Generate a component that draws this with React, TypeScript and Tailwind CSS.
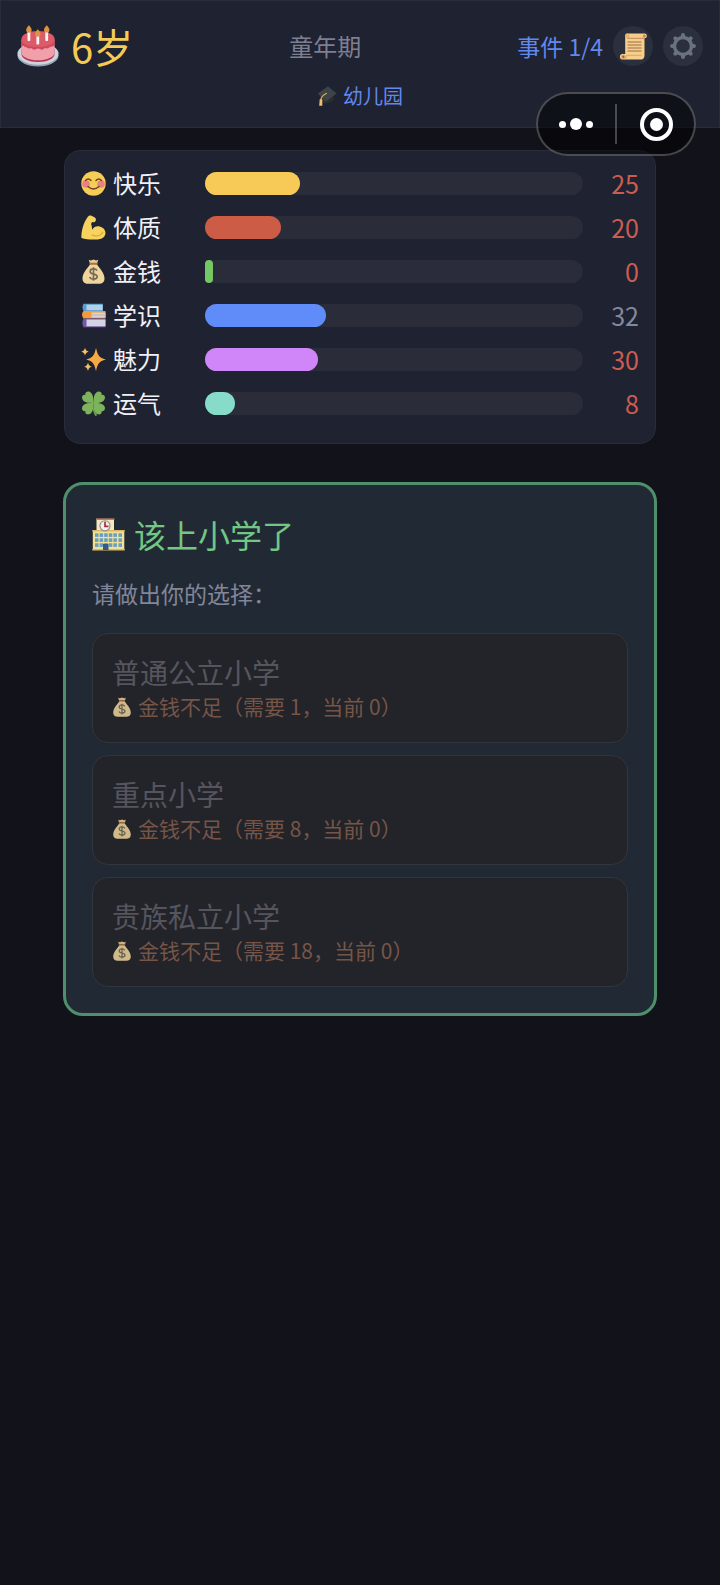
import { useState } from "react";
import type { ReactNode } from "react";
import clsx from "clsx";

interface IconProps {
    className?: string;
}

interface Stat {
    label: string;
    value: number;
    bar: string;
    low: boolean;
    icon: ReactNode;
}

interface SchoolOption {
    name: string;
    cost: number;
}

function CakeIcon({ className }: IconProps) {
    return (
        <svg viewBox="0 0 42 42" className={className} aria-hidden="true">
            <ellipse cx="21" cy="30.5" rx="20.5" ry="11" fill="#8fa0b3" />
            <ellipse cx="21" cy="28.8" rx="20.5" ry="11" fill="#ccd3df" />
            <path d="M4.500 24v5c0 4.800 7.400 8 16.500 8s16.500-3.200 16.500-8v-5z" fill="#b7354c" />
            <path d="M4.500 15v12.500c0 4.600 7.400 7.800 16.500 7.800s16.500-3.200 16.500-7.800V15z" fill="#f09fab" />
            <path
                d="M4.500 13.500v6c1.500 3 4 1.600 5.600 3.200 1.800 1.800 3.700-.3 5.400 1.200 2 1.900 3.500-.4 5.500-.4s3.500 2.300 5.500.4c1.700-1.500 3.600.6 5.400-1.200 1.600-1.600 4.100-.2 5.600-3.200v-6z"
                fill="#cf4a5c"
            />
            <ellipse cx="21" cy="14" rx="16.500" ry="8" fill="#dc5b69" />
            <g fill="#fbf4f3">
                <rect x="10.500" y="6.500" width="2.800" height="9.500" rx=".8" />
                <rect x="28.300" y="6.500" width="2.800" height="9.500" rx=".8" />
                <rect x="19.400" y="10" width="2.800" height="9.500" rx=".8" />
            </g>
            <g fill="#dd9440">
                <path d="M11.900.3c1.700 2 2.700 3.200 2.700 4.700a2.700 2.700 0 0 1-5.400 0c0-1.500 1.100-2.700 2.700-4.700z" />
                <path d="M29.700.3c1.700 2 2.700 3.200 2.700 4.700a2.700 2.700 0 0 1-5.400 0c0-1.500 1.100-2.700 2.700-4.700z" />
                <path d="M20.800 4.300c1.700 2 2.700 3.200 2.700 4.700a2.700 2.700 0 0 1-5.400 0c0-1.500 1.100-2.700 2.700-4.700z" />
            </g>
        </svg>
    );
}

function GradCapIcon({ className }: IconProps) {
    return (
        <svg viewBox="0 0 20 20" className={className} aria-hidden="true">
            <path d="M3.500 9.500l13-2v6.500c-2 3-7 4.500-11 3z" fill="#2a2e31" />
            <path d="M.8 7.600L11 .3l8.600 7.200L8.800 15.800z" fill="#3d4447" />
            <path d="M9.800 7.300C6.500 8.800 4 10.500 3.800 14" fill="none" stroke="#e3b25c" strokeWidth="1.200" />
            <path d="M2.700 13.200h2.600v6.500H2.200z" fill="#f0bf6a" />
        </svg>
    );
}

function ScrollIcon({ className }: IconProps) {
    return (
        <svg viewBox="0 0 27 27" className={className} aria-hidden="true">
            <path d="M7 .5h17.500a2.400 2.400 0 0 1 0 4.800v17c0 2.500-1.200 4.200-3.200 4.200H3.500a2.900 2.900 0 1 1 0-5.600h1.700V3c0-1.400.6-2.500 1.800-2.500z" fill="#f6d08a" />
            <path d="M5.200 3.500c0-2 .8-3 2-3 1.500 0 2.300 1 2.300 2.500s-.9 2.500-2.200 2.500" fill="#e8b66c" />
            <path d="M7.500 5.300h17" stroke="#bb8150" strokeWidth=".9" />
            <circle cx="24.300" cy="3" r="1.500" fill="#c58b58" />
            <circle cx="3.300" cy="23.700" r="2.300" fill="#dfa467" />
            <circle cx="3.300" cy="23.700" r="1" fill="#8f5a3f" />
            <path d="M4 26.300c1.900-.4 2.800-1.900 2.500-4h15" fill="none" stroke="#d69c61" strokeWidth=".8" />
            <path d="M7.500 9h14M7.500 12h14M7.500 15h14M7.500 18h14" stroke="#9c6a4c" strokeWidth="1.200" />
        </svg>
    );
}

function GearIcon({ className }: IconProps) {
    const teeth = [0, 45, 90, 135, 180, 225, 270, 315];
    return (
        <svg viewBox="0 0 28 28" className={className} aria-hidden="true">
            <circle cx="14" cy="14" r="8.500" fill="none" stroke="#69737b" strokeWidth="3.400" />
            {teeth.map((angle) => (
                <path
                    key={angle}
                    d="M11.700 5L12.300 1.800Q14 .2 15.700 1.800L16.300 5z"
                    fill="#69737b"
                    transform={`rotate(${angle} 14 14)`}
                />
            ))}
        </svg>
    );
}

function SmileIcon({ className }: IconProps) {
    return (
        <svg viewBox="0 0 25 25" className={className} aria-hidden="true">
            <circle cx="12.500" cy="12.500" r="12.200" fill="#f7ce55" />
            <circle cx="5" cy="13" r="3.800" fill="#ea7f88" />
            <circle cx="20" cy="13" r="3.800" fill="#ea7f88" />
            <g fill="none" stroke="#6e4024" strokeWidth="1.400" strokeLinecap="round">
                <path d="M4.500 9.500Q7.300 6.500 10 9.500" />
                <path d="M15 9.500Q17.700 6.500 20.500 9.500" />
                <path d="M7 15.500Q12.500 20.300 18 15.500" />
            </g>
        </svg>
    );
}

function MuscleIcon({ className }: IconProps) {
    return (
        <svg viewBox="0 0 25 25" className={className} aria-hidden="true">
            <path
                d="M.4 23C.2 16 2.500 7.500 6.500 2.200 7.500.7 9 .1 10.500.8l3 1.500c1.300.7 1.700 2 1.300 3.200-.5 1.600-2 2.100-3.500 1.500-.8.6-1.300 1.600-1 2.700.6 1.900.8 3.300.7 5 2-2.900 5-4 8.200-3 3.600 1 5.600 4 5.200 7-.5 3.800-4.200 5.600-9 5.800-5 .3-10.300 0-15-1.500z"
                fill="#f7d35e"
            />
            <path d="M11.200 20c4 1.700 8.300.9 10.500-2.800" fill="none" stroke="#d9a03c" strokeWidth="1.200" strokeLinecap="round" />
        </svg>
    );
}

function MoneyBagIcon({ className }: IconProps) {
    return (
        <svg viewBox="0 0 25 25" className={className} aria-hidden="true">
            <path d="M7.700.8l2.200.8L12.500.5l2.600 1.100 2.200-.8-1.800 5.300h-6z" fill="#eacb8f" />
            <path d="M9 5.500h7c2 3.300 7.500 8 7.500 14 0 3.800-2.300 5.300-5.500 5.300H7c-3.200 0-5.500-1.500-5.500-5.300 0-6 5.500-10.700 7.500-14z" fill="#efd59c" />
            <rect x="8.300" y="3.800" width="8.400" height="1.900" rx=".9" fill="#a47348" />
            <path
                d="M16 11.700c-.6-1.200-1.900-1.800-3.500-1.800-2 0-3.400 1-3.400 2.600 0 3.800 7.100 1.500 7.100 5.100 0 1.600-1.500 2.600-3.600 2.600-1.900 0-3.300-.8-3.900-2.200M12.500 8.300v13.500"
                fill="none"
                stroke="#756c57"
                strokeWidth="1.600"
            />
        </svg>
    );
}

function BooksIcon({ className }: IconProps) {
    return (
        <svg viewBox="0 0 25 25" className={className} aria-hidden="true">
            <path d="M2.500.8h19.500v7.200H2.500Q.5 4.300 2.500.8z" fill="#5a9bd0" />
            <path d="M5.500 1.800h16v5.400h-16z" fill="#b5d0e2" />
            <path d="M2.500 8h22v7.500h-22Q-.5 11.700 2.500 8z" fill="#f29a3d" />
            <path d="M10.500 9.500h14v5h-14z" fill="#d9d5d2" />
            <path d="M10.500 12h14" stroke="#b8a9a0" strokeWidth=".8" />
            <path d="M2.500 15.500h22v8.800h-22Q.3 20 2.500 15.500z" fill="#7557a5" />
            <path d="M5.500 16.500h19v6.800h-19z" fill="#d4d3e3" />
        </svg>
    );
}

function SparklesIcon({ className }: IconProps) {
    return (
        <svg viewBox="0 0 25 25" className={className} aria-hidden="true">
            <path d="M15 .8c1.600 7.500 3 9.800 9.800 11.700C18 14.400 16.600 16.700 15 24.200c-1.600-7.500-3-9.800-9.800-11.700C12 10.600 13.400 8.300 15 .8z" fill="#f5ab43" />
            <path d="M4 .8c.7 2.500 1.400 3.200 3.700 3.900C5.400 5.400 4.700 6.100 4 8.600 3.300 6.100 2.600 5.400.3 4.700 2.600 4 3.300 3.300 4 .8z" fill="#f4c065" />
            <path d="M7 15.600c.7 2.700 1.400 3.500 3.900 4.200-2.500.7-3.200 1.500-3.900 4.200-.7-2.700-1.400-3.500-3.900-4.200 2.500-.7 3.200-1.500 3.900-4.200z" fill="#f4c065" />
        </svg>
    );
}

function CloverIcon({ className }: IconProps) {
    const leaf = "M12.500 12.200C9.800 9 7 6.500 7 3.200c0-2.500 1.500-4 3.200-4 1.200 0 2 .6 2.300 1.600.3-1 1.100-1.600 2.300-1.600 1.700 0 3.200 1.500 3.200 4C18 6.500 15.200 9 12.500 12.200z";
    return (
        <svg viewBox="0 0 25 25" className={className} aria-hidden="true">
            <path d="M12 12c.3 5 1.500 8.700 4.300 12.300l-2 .6C12 21.500 11.300 17 11.300 12z" fill="#6c9f50" />
            {[45, 135, 225, 315].map((angle) => (
                <path key={angle} d={leaf} fill="#7db45b" transform={`rotate(${angle} 12.500 12)`} />
            ))}
        </svg>
    );
}

function SchoolIcon({ className }: IconProps) {
    return (
        <svg viewBox="0 0 33 33" className={className} aria-hidden="true">
            <path d="M4.500 1h17.500v14h-17.500z" fill="#f6e6bd" />
            <path d="M4 .3h18.500v1.600H4z" fill="#a8775c" />
            <path d="M.8 12.500h31.500V32H.8z" fill="#f3df95" />
            <path d="M.3 12h32.400v1.500H.3zM.3 31h32.400v1.600H.3z" fill="#d9b968" />
            <circle cx="13" cy="7.800" r="5.600" fill="#8f8a8a" />
            <circle cx="13" cy="7.800" r="4.500" fill="#f4efee" />
            <path d="M13 3.800v4.500h3.500" fill="none" stroke="#a52f3d" strokeWidth="1.700" />
            <g fill="#659fc2">
                {[15.300, 20.300, 25.300].map((y) =>
                    [3, 7.600, 12.200, 16.800, 21.400, 26.500].map((x) => (
                        <rect key={`${x}-${y}`} x={x} y={y} width="3.500" height="3.600" />
                    ))
                )}
            </g>
            <path d="M11 25.800h5.500V32H11z" fill="#345b87" />
        </svg>
    );
}

const stats: Stat[] = [
    { label: "快乐", value: 25, bar: "bg-[#f7ca57]", low: true, icon: <SmileIcon className="size-[25px]" /> },
    { label: "体质", value: 20, bar: "bg-[#cc5c46]", low: true, icon: <MuscleIcon className="size-[25px]" /> },
    { label: "金钱", value: 0, bar: "bg-[#74c763]", low: true, icon: <MoneyBagIcon className="size-[25px]" /> },
    { label: "学识", value: 32, bar: "bg-[#5f8cf8]", low: false, icon: <BooksIcon className="size-[25px]" /> },
    { label: "魅力", value: 30, bar: "bg-[#d085f8]", low: true, icon: <SparklesIcon className="size-[25px]" /> },
    { label: "运气", value: 8, bar: "bg-[#86dbc9]", low: true, icon: <CloverIcon className="size-[25px]" /> },
];

const options: SchoolOption[] = [
    { name: "普通公立小学", cost: 1 },
    { name: "重点小学", cost: 8 },
    { name: "贵族私立小学", cost: 18 },
];

function Header() {
    return (
        <header className="border border-[#2a2c39] bg-[#1f2230] px-4 pt-[15px] pb-[17px]">
            <div className="flex h-[60px] items-center justify-between">
                <div className="flex items-center gap-3">
                    <CakeIcon className="size-[42px]" />
                    <span className="text-[40px] leading-[48px] text-[#f5cb55]">6岁</span>
                </div>
                <span className="text-[24px] text-[#7d7f92]">童年期</span>
                <div className="flex items-center gap-[10px]">
                    <span className="text-[23px] text-[#6288ee]">事件 1/4</span>
                    <button aria-label="人生记录" className="flex size-10 items-center justify-center rounded-full bg-[#2c2f3d]">
                        <ScrollIcon className="size-[27px]" />
                    </button>
                    <button aria-label="设置" className="flex size-10 items-center justify-center rounded-full bg-[#2c2f3d]">
                        <GearIcon className="size-[28px]" />
                    </button>
                </div>
            </div>
            <div className="mt-[6px] flex h-7 items-center justify-center gap-[6px]">
                <GradCapIcon className="size-5" />
                <span className="text-[20px] text-[#6288ee]">幼儿园</span>
            </div>
        </header>
    );
}

// Floating mini program capsule, sits over the header and the stats card
function Capsule() {
    return (
        <div className="absolute top-[92px] right-6 flex h-16 w-40 items-center rounded-full border-2 border-white/25 bg-black/50">
            <button aria-label="更多" className="flex h-full flex-1 items-center justify-center gap-1 pr-[2px]">
                <span className="size-[7px] rounded-full bg-white" />
                <span className="size-3 rounded-full bg-white" />
                <span className="size-[7px] rounded-full bg-white" />
            </button>
            <span className="h-10 w-[2px] bg-white/25" />
            <button aria-label="关闭" className="flex h-full flex-1 items-center justify-center pl-[2px]">
                <span className="flex size-[33px] items-center justify-center rounded-full border-4 border-white">
                    <span className="size-[13px] rounded-full bg-white" />
                </span>
            </button>
        </div>
    );
}

function StatRow({ stat }: { stat: Stat }) {
    return (
        <div className="flex h-[34px] items-center gap-[10px]">
            <div className="flex w-[114px] items-center gap-[7px]">
                {stat.icon}
                <span className="text-[24px] leading-[34px] text-[#f0f0f6]">{stat.label}</span>
            </div>
            <div className="h-[23px] flex-1 rounded-full bg-[#2a2c39]">
                <div className={clsx("h-full min-w-2 rounded-full", stat.bar)} style={{ width: `${stat.value}%` }} />
            </div>
            <span
                className={clsx(
                    "w-[46px] text-right text-[25px] leading-[34px]",
                    stat.low ? "text-[#cd5c50]" : "text-[#85879b]"
                )}
            >
                {stat.value}
            </span>
        </div>
    );
}

export default function App() {
    const [money] = useState(0);

    return (
        <div className="relative min-h-screen bg-[#12121a] font-['Noto_Sans_CJK_SC',sans-serif]" lang="zh-CN">
            <Header />
            <main className="px-[63px] pt-[22px]">
                <section className="mx-px flex flex-col gap-[10px] rounded-2xl border border-[#2a2c39] bg-[#1f2230] px-4 pt-[15px] pb-[23px]">
                    {stats.map((stat) => (
                        <StatRow key={stat.label} stat={stat} />
                    ))}
                </section>

                <section className="mt-[38px] rounded-[20px] border-3 border-[#4f8f6c] bg-[#212a34] p-[26px]">
                    <div className="flex h-[46px] items-center gap-[9px]">
                        <SchoolIcon className="size-[33px]" />
                        <h1 className="text-[32px] leading-[46px] text-[#72c784]">该上小学了</h1>
                    </div>
                    <p className="mt-[21px] text-[23px] leading-[30px] text-[#81869a]">请做出你的选择：</p>
                    <div className="mt-[25px] flex flex-col gap-3">
                        {options.map((option) => (
                            <button
                                key={option.name}
                                disabled={money < option.cost}
                                className="rounded-2xl border border-[#31353c] bg-[#232429] px-[19px] py-[19px] text-left"
                            >
                                <span className="block text-[28px] leading-[38px] text-[#56555f]">{option.name}</span>
                                <span className="flex h-8 items-center gap-[6px] text-[21px] text-[#765548]">
                                    <MoneyBagIcon className="size-5 opacity-85" />
                                    金钱不足（需要 {option.cost}，当前 {money}）
                                </span>
                            </button>
                        ))}
                    </div>
                </section>
            </main>
            <Capsule />
        </div>
    );
}
